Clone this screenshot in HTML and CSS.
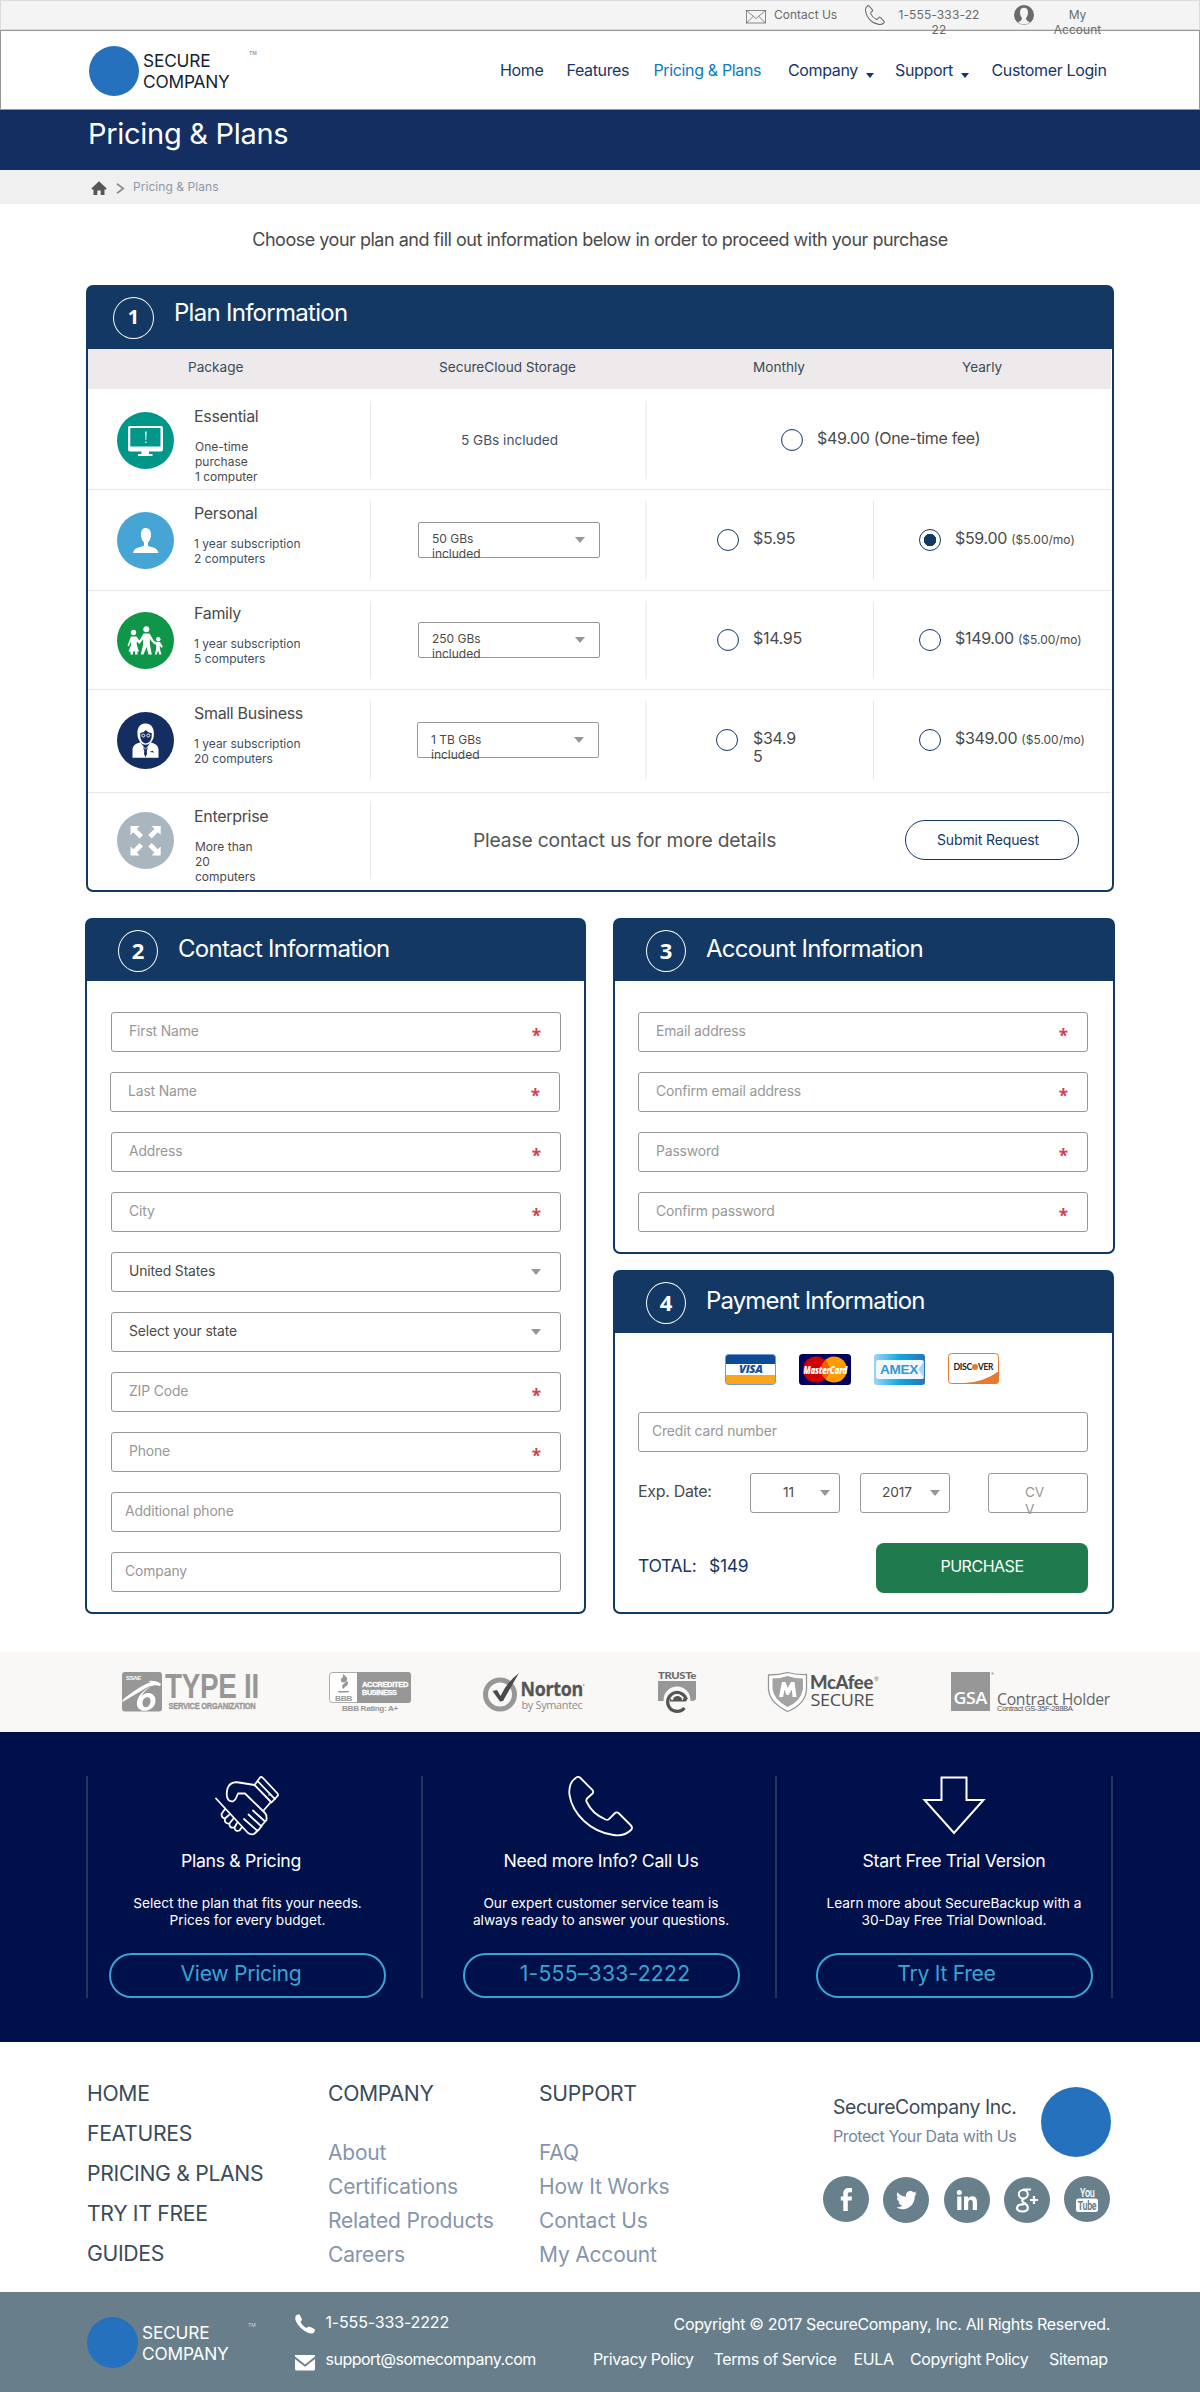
FILE: index.html
```html
<!DOCTYPE html>
<html lang="en">
<head>
<meta charset="utf-8">
<title>Pricing &amp; Plans - Secure Company</title>
<link rel="stylesheet" href="styles.css">
</head>
<body>
<div class="topbar">
  <svg class="tb-mail" width="20" height="14" viewBox="0 0 20 14" fill="none" stroke="#6d6d6d" stroke-width=".8"><rect x=".5" y=".5" width="19" height="12.5"/><path d="M.5 .5L10 8.5L19.5 .5M.5 13L7.3 6.3M19.5 13L12.7 6.3"/></svg>
  <a class="tb-contact">Contact Us</a>
  <svg class="tb-phone" width="20" height="20" viewBox="-1 -1 67 62" preserveAspectRatio="none" fill="none" stroke="#6d6d6d" stroke-width="3.500"><path d="M8.6 1C10 .5 11 1 12 2L24 14C25 15.500 25 16.500 24 17.500L19 22C17.500 23.500 17.500 25 18.500 26.500C22 34 29 40 37 43.500C39 44.300 40 44 41 42.500L46 37.500C47.500 36 49 36 50.500 37.500L62 49C64 51 64 52.500 62.500 54C58 58.500 52 60 45 59C22 56 4 38 1 19C0 11 2 5 8.600 1Z"/></svg>
  <a class="tb-number">1-555-333-22<br>22</a>
  <svg class="tb-user" width="20" height="20" viewBox="0 0 20 20"><circle cx="10" cy="10" r="10" fill="#6b6b6b"/><path d="M10 2.800C12.800 2.800 14 4.800 14 7.500C14 10 13 11.800 12.200 12.800C12 14.500 12.300 15.500 14.500 16.500L16 17.500Q13.500 19.500 10 19.500Q6.500 19.500 4 17.500L5.500 16.500C7.700 15.500 8 14.500 7.800 12.800C7 11.800 6 10 6 7.500C6 4.800 7.200 2.800 10 2.800Z" fill="#f4f4f4"/></svg>
  <a class="tb-account">My<br>Account</a>
</div>

<header class="header">
  <a class="logo"><i class="disc"></i><span class="logo-text">SECURE<br>COMPANY</span><sup class="tm">TM</sup></a>
  <nav class="nav">
    <a>Home</a><a>Features</a><a class="active">Pricing &amp; Plans</a><a>Company<i class="caret"></i></a><a>Support<i class="caret"></i></a><a>Customer Login</a>
  </nav>
</header>
<div class="title-band"><h1>Pricing &amp; Plans</h1></div>
<div class="crumbs">
  <svg width="16" height="15" viewBox="0 0 16 15"><path d="M8 .3L15.700 7.600L14.800 8.500H13.500V14H9.700V9.500H6.300V14H2.500V8.500H1.200L.3 7.600Z" fill="#565656"/></svg>
  <svg class="chev" width="9" height="11" viewBox="0 0 9 11"><path d="M1 .8L7.200 5.500L1 10.200" fill="none" stroke="#8b8b8b" stroke-width="1.700"/></svg>
  <span>Pricing &amp; Plans</span>
</div>
<p class="intro">Choose your plan and fill out information below in order to proceed with your purchase</p>

<section class="card plans">
  <div class="card-head"><b class="num">1</b><h2>Plan Information</h2></div>
  <div class="cols"><span>Package</span><span>SecureCloud Storage</span><span>Monthly</span><span>Yearly</span></div>

  <div class="row r1">
    <div class="cell pkg low">
      <svg class="badge" viewBox="0 0 57 57"><circle cx="28.500" cy="28.500" r="28.500" fill="#009688"/><path d="M12.500 14H44Q46 14 46 16V37.500Q46 39.500 44 39.500H32V42H35.500V44H21V42H24.500V39.500H13Q11 39.500 11 37.500V16Q11 14 12.500 14ZM13.300 16V34.500H43.500V16Z" fill="#fff" fill-rule="evenodd"/><path d="M28.200 19.500H29.600L29.300 28H28.500ZM28.300 29.500H29.500V31H28.300Z" fill="#fff"/></svg>
      <div><h3>Essential</h3><p class="grey">One-time<br>purchase<br>1 computer</p></div>
    </div>
    <div class="cell included">5 GBs included</div>
    <div class="cell wide"><i class="radio"></i><span>$49.00 (One-time fee)</span></div>
  </div>

  <div class="row r2">
    <div class="cell pkg">
      <svg class="badge" viewBox="0 0 57 57"><circle cx="28.500" cy="28.500" r="28.500" fill="#47a5d6"/><path d="M28.500 16C32 16 34 18.500 34 22.500C34 26.500 32.500 29 31 30.500V33.500C32 35.500 40.500 34.500 41.500 41H16C17 34.500 25.500 35.500 27 33.500V30.500C25.500 29 24 26.500 24 22.500C24 18.500 25.500 16 28.500 16Z" fill="#fff"/></svg>
      <div><h3>Personal</h3><p>1 year subscription<br>2 computers</p></div>
    </div>
    <div class="cell store"><div class="select">50 GBs<br>included<i class="tri"></i></div></div>
    <div class="cell month"><i class="radio"></i><span>$5.95</span></div>
    <div class="cell year"><i class="radio on"></i><span>$59.00 <small>($5.00/mo)</small></span></div>
  </div>

  <div class="row r3">
    <div class="cell pkg">
      <svg class="badge" viewBox="0 0 57 57"><circle cx="28.500" cy="28.500" r="28.500" fill="#0f9648"/><g fill="#fff"><circle cx="16.500" cy="20.500" r="2.700"/><circle cx="29.300" cy="17.300" r="3"/><circle cx="41.300" cy="27.200" r="2.200"/><path d="M14 24.500H19.500L22.500 28.500L26.500 21.500H32.500L37 29L39.500 30H43L45.800 34.500L44.800 36L42.800 34V36.500L44.500 42.500H42.300L41 38.500L39.800 42.500H37.800L39.200 36.500V33L36.500 31.500L32.800 27V32L34.800 42.500H31.500L29.500 35L26.500 42.500H23.800L26.200 32V27L22.500 32L19.800 29.500V33L22 39.500H20.500V42.500H18V39.500H16V42.500H13.500V39.500H11.500L14 33V29.500L11.800 34.500L10.500 33.500Z"/></g></svg>
      <div><h3>Family</h3><p>1 year subscription<br>5 computers</p></div>
    </div>
    <div class="cell store"><div class="select">250 GBs<br>included<i class="tri"></i></div></div>
    <div class="cell month"><i class="radio"></i><span>$14.95</span></div>
    <div class="cell year"><i class="radio"></i><span>$149.00 <small>($5.00/mo)</small></span></div>
  </div>

  <div class="row r4">
    <div class="cell pkg">
      <svg class="badge" viewBox="0 0 57 57"><circle cx="28.500" cy="28.500" r="28.500" fill="#142e62"/><path d="M15.500 45.800V38C15.500 33 20 31 23.500 30.500L28.500 37L33.500 30.500C37 31 41.500 33 41.500 38V45.800Z" fill="#fff"/><path d="M21 26C19 17 22 11.500 28.500 11.500C35 11.500 38 17 36.500 26L35 29C32 34 25 34 22.500 29Z" fill="#fff"/><path d="M23.300 21Q27 20.500 29 18Q31 21 34.700 21V25Q34 30.500 28.700 31.500Q24 30.500 23.300 25Z" fill="#142e62"/><g fill="none" stroke="#fff" stroke-width=".9"><circle cx="26.300" cy="23.500" r="1.500"/><circle cx="31.300" cy="23.500" r="1.500"/></g><path d="M26 35L28.500 37.500L31 35L29.800 39L30 42L28.500 45L27 42L27.300 39ZM32.500 40L35.500 38.800L37.500 40.500Z" fill="#142e62"/></svg>
      <div><h3>Small Business</h3><p>1 year subscription<br>20 computers</p></div>
    </div>
    <div class="cell store"><div class="select">1 TB GBs<br>included<i class="tri"></i></div></div>
    <div class="cell month"><i class="radio"></i><span>$34.9<br>5</span></div>
    <div class="cell year"><i class="radio"></i><span>$349.00 <small>($5.00/mo)</small></span></div>
  </div>

  <div class="row r5">
    <div class="cell pkg low">
      <svg class="badge" viewBox="0 0 57 57"><circle cx="28.500" cy="28.500" r="28.500" fill="#a9b6c0"/><g fill="#fff"><path d="M13.500 14H22.500L19.800 17L26 23L22.500 26.500L16.300 20.300L13.500 23Z"/><path d="M43.700 14H34.700L37.400 17L31.200 23L34.700 26.500L40.900 20.300L43.700 23Z"/><path d="M13.500 43.500H22.500L19.800 40.500L26 34.500L22.500 31L16.300 37.200L13.500 34.500Z"/><path d="M43.700 43.500H34.700L37.400 40.500L31.200 34.500L34.700 31L40.900 37.200L43.700 34.500Z"/></g></svg>
      <div><h3>Enterprise</h3><p class="grey">More than<br>20<br>computers</p></div>
    </div>
    <div class="cell enterprise"><span>Please contact us for more details</span><a class="submit">Submit Request</a></div>
  </div>
</section>

<div class="forms">
  <section class="card contact">
    <div class="card-head"><b class="num">2</b><h2>Contact Information</h2></div>
    <div class="fields">
      <div class="field">First Name<b>*</b></div>
      <div class="field nudge">Last Name<b>*</b></div>
      <div class="field">Address<b>*</b></div>
      <div class="field">City<b>*</b></div>
      <div class="field dark">United States<i class="tri"></i></div>
      <div class="field dark">Select your state<i class="tri"></i></div>
      <div class="field">ZIP Code<b>*</b></div>
      <div class="field">Phone<b>*</b></div>
      <div class="field plain">Additional phone</div>
      <div class="field plain">Company</div>
    </div>
  </section>
  <div class="right">
    <section class="card account">
      <div class="card-head"><b class="num">3</b><h2>Account Information</h2></div>
      <div class="fields">
        <div class="field">Email address<b>*</b></div>
        <div class="field">Confirm email address<b>*</b></div>
        <div class="field">Password<b>*</b></div>
        <div class="field">Confirm password<b>*</b></div>
      </div>
    </section>
    <section class="card payment">
      <div class="card-head"><b class="num">4</b><h2>Payment Information</h2></div>
      <div class="brands">
        <svg width="51" height="31" viewBox="0 0 51 31"><defs><clipPath id="vc"><rect x=".5" y=".5" width="50" height="30" rx="3"/></clipPath></defs><g clip-path="url(#vc)"><rect width="51" height="31" fill="#fff"/><rect width="51" height="10" fill="#0f4a94"/><rect y="21" width="51" height="10" fill="#f9a61c"/></g><rect x=".5" y=".5" width="50" height="30" rx="3" fill="none" stroke="#6f9bd0"/><text x="14" y="19" textLength="23.500" lengthAdjust="spacingAndGlyphs" font-family="Open Sans" font-weight="800" font-style="italic" font-size="10" fill="#0f4f96">VISA</text></svg>
        <svg width="52" height="31" viewBox="0 0 52 31"><rect width="52" height="31" rx="3.500" fill="#00005f"/><circle cx="35" cy="15.500" r="13" fill="#ff9a00"/><circle cx="17" cy="15.500" r="13" fill="#d00000"/><path d="M26 6.200A13 13 0 0 1 26 24.800A13 13 0 0 1 26 6.200Z" fill="#f06000"/><text x="4.500" y="20" textLength="43.500" lengthAdjust="spacingAndGlyphs" font-family="Open Sans" font-weight="800" font-style="italic" font-size="10" fill="#fff">MasterCard</text></svg>
        <svg width="51" height="31" viewBox="0 0 51 31"><defs><linearGradient id="ag"><stop offset="0" stop-color="#9ed4f6"/><stop offset=".5" stop-color="#10a8e0"/><stop offset="1" stop-color="#2a74b8"/></linearGradient></defs><rect width="51" height="31" rx="3" fill="url(#ag)"/><rect x="2" y="6" width="48" height="19" rx="2.500" fill="#f3f8fc"/><path d="M50 7L44.500 15.500L50 24" fill="#a9d3f0"/><text x="6" y="19.800" textLength="38" lengthAdjust="spacingAndGlyphs" font-family="Liberation Sans" font-weight="700" font-size="12.500" fill="#3597d4">AMEX</text></svg>
        <svg class="up" width="51" height="31" viewBox="0 0 51 31"><rect x=".5" y=".5" width="50" height="30" rx="3" fill="#fff" stroke="#e87830"/><path d="M17 30Q36 29 51 18V27Q51 31 47 31H17Z" fill="#e87830"/><text x="5.500" y="17" textLength="18.500" lengthAdjust="spacingAndGlyphs" font-family="Lato" font-weight="700" font-size="8.500" fill="#222">DISC</text><circle cx="27" cy="14" r="3" fill="#e87830"/><text x="30" y="17" textLength="15" lengthAdjust="spacingAndGlyphs" font-family="Lato" font-weight="700" font-size="8.500" fill="#222">VER</text></svg>
      </div>
      <div class="field cc">Credit card number</div>
      <div class="exp"><label>Exp. Date:</label><div class="mini m1">11<i class="tri"></i></div><div class="mini m2">2017<i class="tri"></i></div><div class="mini cvv">CV<br>V</div></div>
      <div class="pay"><span class="tot">TOTAL:</span><span class="sum">$149</span><a class="purchase">PURCHASE</a></div>
    </section>
  </div>
</div>

<div class="trust">
  <svg width="1200" height="80" viewBox="0 1652 1200 80">
    <g fill="#979797" font-family="Liberation Sans" font-weight="700">
      <rect x="122" y="1672" width="40" height="39.500" rx="3"/>
      <path d="M122.500 1700C132 1692 142 1685 151 1682L148 1681Q156 1680 161 1684L160 1686Q152 1684 146 1688Q136 1694 122.500 1702Z" fill="#fff"/>
      <path d="M154 1685C142 1690 136 1698 137 1705C138 1712 149 1713 154 1706C158 1699 154 1692 147 1693C143 1694 141 1697 141 1697Q145 1689 154 1685ZM142.500 1703C142.500 1696 151.500 1695 150.500 1701.500C149.500 1709 142.500 1709 142.500 1703Z" fill="#fff" fill-rule="evenodd"/>
      <text x="126" y="1679.500" font-size="6" textLength="15" lengthAdjust="spacingAndGlyphs" fill="#fff">SSAE</text>
      <text x="165" y="1697.500" font-size="35.500" textLength="94" lengthAdjust="spacingAndGlyphs">TYPE II</text>
      <text x="168.500" y="1709" font-size="9.500" textLength="87" lengthAdjust="spacingAndGlyphs" stroke="#979797" stroke-width=".3">SERVICE ORGANIZATION</text>
      <rect x="329.500" y="1672.500" width="81" height="30" rx="3" fill="#fff" stroke="#979797" stroke-width=".8"/>
      <path d="M357 1672H408Q411 1672 411 1675V1700Q411 1703 408 1703H357Z"/>
      <path d="M343 1674Q349 1678 346.500 1681Q343 1684 341 1681Q340 1679 343 1677ZM347 1681Q350 1684 345 1687L343 1689Q341 1686 343.500 1684ZM337.500 1691H349.500L348 1692.500H339Z"/>
      <text x="335" y="1700.500" font-size="8" textLength="17" lengthAdjust="spacingAndGlyphs">BBB</text>
      <text x="362" y="1686.500" font-size="7" textLength="46" lengthAdjust="spacingAndGlyphs" fill="#fff" stroke="#fff" stroke-width=".3">ACCREDITED</text>
      <text x="362" y="1695" font-size="7" textLength="34.500" lengthAdjust="spacingAndGlyphs" fill="#fff" stroke="#fff" stroke-width=".3">BUSINESS</text>
      <text x="342" y="1711" font-size="7.500" textLength="56" lengthAdjust="spacingAndGlyphs">BBB Rating: A+</text>
    </g>
    <circle cx="500" cy="1694.500" r="14.500" fill="none" stroke="#979797" stroke-width="5"/>
    <path d="M492.500 1691L497 1690L500.500 1696Q507 1682 519 1673Q512 1685 503 1701L500 1701.500Z" fill="#4a4a4a"/>
    <text x="520.500" y="1696.300" font-family="Open Sans" font-weight="700" font-size="19.500" textLength="62.500" lengthAdjust="spacingAndGlyphs" fill="#555" stroke="#555" stroke-width=".3">Norton</text><rect x="583" y="1684.500" width="1.500" height="1" fill="#777"/>
    <text x="521.500" y="1708.500" font-family="Open Sans" font-size="11" textLength="61" lengthAdjust="spacingAndGlyphs" fill="#8c8c8c">by Symantec</text>
    <text x="658" y="1679.300" font-family="Lato" font-weight="900" font-size="10" textLength="38" lengthAdjust="spacingAndGlyphs" fill="#6b6b6b">TRUSTe</text>
    <path d="M658 1681H696V1698Q696 1701 692 1701H658V1698Z" fill="#979797"/><circle cx="677" cy="1700" r="13.500" fill="#f9f8f6"/>
    <path d="M684.500 1708A9.500 9.500 0 1 1 686 1698.500L685 1700H670" fill="none" stroke="#555" stroke-width="3.200"/><path d="M671 1700A6 6 0 0 1 683 1700Z" fill="#f9f8f6"/><path d="M673 1700A4.500 4 0 0 1 682 1700Z" fill="#555"/>
    <path d="M768.500 1675Q779 1675 787.500 1672.500Q796 1675 806.500 1674.500V1689Q806 1704 787.500 1711.500Q769 1702 768.500 1689Z" fill="#fff" stroke="#979797" stroke-width="1.300"/>
    <path d="M772.500 1678.500Q780 1678.500 787.500 1676Q795 1678.500 803 1678.500V1689Q801 1701 787.500 1707Q774 1700 772.500 1689Z" fill="#a3a3a3"/>
    <path d="M779 1697L782 1682H785.500L787.700 1688L791 1682H794.500L796.500 1697H792.500L791.800 1689.500L788.500 1695H786.500L784.500 1689.500L783 1697Z" fill="#fff"/>
    <text x="810" y="1688.700" font-family="Lato" font-weight="900" font-size="18.500" textLength="63" lengthAdjust="spacingAndGlyphs" fill="#555">McAfee</text><text x="874" y="1680.500" font-family="Lato" font-size="6" fill="#777">®</text>
    <text x="810.500" y="1706" font-family="Open Sans" font-size="17" textLength="63.500" lengthAdjust="spacingAndGlyphs" fill="#4f4f4f">SECURE</text>
    <rect x="951" y="1672" width="39" height="39" fill="#979797"/><rect x="991.500" y="1672.500" width="2" height="2" fill="#8fa9c9"/>
    <text x="953.500" y="1704" font-family="Open Sans" font-weight="600" font-size="17" textLength="33.500" lengthAdjust="spacingAndGlyphs" fill="#fff">GSA</text>
    <text x="997" y="1704.500" font-family="Open Sans" font-weight="400" font-size="17" textLength="113" lengthAdjust="spacingAndGlyphs" fill="#666">Contract Holder</text>
    <text x="997" y="1711" font-family="Liberation Sans" font-size="6.500" textLength="75.500" lengthAdjust="spacingAndGlyphs" fill="#555">Contract GS-35F-288BA</text>
  </svg>
</div>

<section class="cta">
  <div class="cta-col">
    <svg width="66" height="60" viewBox="0 0 66 60" fill="none" stroke="#fff" stroke-width="1.800" stroke-linejoin="round" stroke-linecap="round"><path d="M39.500 9L45 1.500Q46 .5 47.500 1.500L62.500 17.500Q63.500 19 62.500 20L56.500 26.500L39.500 9ZM43 5.500L60 23.200M39.500 9L24 6.500Q15 5 12.500 12.500Q10.500 20 13.500 24Q19 28 21.500 21L23 17.500H30L50 37Q52 39 51.500 44L47.500 48.500L44 53.500L39 58Q36 59 33 57L1 22.500M55.500 26.500L49 34M38 34.500L49.500 45M33.500 38.500L46.500 50.500M29 43L42.500 55M10 33L6.500 38Q6.500 42 10 42.500L14 39M10 42.500Q9 48 14.500 47.500L18 43M14.500 47.500Q14 52.500 19.500 51.500L22 47M19.500 51.500Q20 56 24.500 54.500L27 51"/><circle cx="54" cy="19" r=".8" fill="#fff" stroke="none"/></svg>
    <h2>Plans &amp; Pricing</h2>
    <p>Select the plan that fits your needs.<br>Prices for every budget.</p>
    <a class="pill">View Pricing</a>
  </div>
  <div class="cta-col">
    <svg width="66" height="60" viewBox="-.5 0 66 60" fill="none" stroke="#fff" stroke-width="1.800"><path d="M8.600 1C10 .5 11 1 12 2L24 14C25 15.500 25 16.500 24 17.500L19 22C17.500 23.500 17.500 25 18.500 26.500C22 34 29 40 37 43.500C39 44.300 40 44 41 42.500L46 37.500C47.500 36 49 36 50.500 37.500L62 49C64 51 64 52.500 62.500 54C58 58.500 52 60 45 59C22 56 4 38 1 19C0 11 2 5 8.600 1Z"/></svg>
    <h2>Need more Info? Call Us</h2>
    <p>Our expert customer service team is<br>always ready to answer your questions.</p>
    <a class="pill">1-555–333-2222</a>
  </div>
  <div class="cta-col">
    <svg width="66" height="60" viewBox="0 0 66 60" fill="none" stroke="#fff" stroke-width="2"><path d="M20.500 1.500H45.500V24H62.500L33 57L3.500 24H20.500Z"/></svg>
    <h2>Start Free Trial Version</h2>
    <p>Learn more about SecureBackup with a<br>30-Day Free Trial Download.</p>
    <a class="pill">Try It Free</a>
  </div>
</section>

<div class="links">
  <ul class="main"><li>HOME</li><li>FEATURES</li><li>PRICING &amp; PLANS</li><li>TRY IT FREE</li><li>GUIDES</li></ul>
  <div class="sub"><h4>COMPANY</h4><ul><li>About</li><li>Certifications</li><li>Related Products</li><li>Careers</li></ul></div>
  <div class="sub"><h4>SUPPORT</h4><ul><li>FAQ</li><li>How It Works</li><li>Contact Us</li><li>My Account</li></ul></div>
  <div class="brand">
    <div class="brand-top"><div><strong>SecureCompany Inc.</strong><em>Protect Your Data with Us</em></div><i class="disc"></i></div>
    <div class="social">
      <svg viewBox="0 0 46 46"><circle cx="23" cy="23" r="23" fill="#68808c"/><path d="M29 12V16.200H26.800C25 16.200 24.800 17 24.800 18.200V20.500H29L28.500 24.500H24.800V35H20.300V24.500H17.800V20.500H20.300V17.500C20.300 14 22.300 12 25.800 12Z" fill="#fff"/></svg>
      <svg class="dn" viewBox="0 0 46 46"><circle cx="23" cy="23" r="23" fill="#68808c"/><path d="M33.800 16.500L31.800 19C32 26 27 32.200 20 32.200C17.500 32.200 15.300 31.500 13.300 30.300C15.800 30.500 17.800 29.800 19.500 28.500C17.500 28.300 16 27 15.500 25.200H17.300C15.200 24.500 13.800 22.800 13.800 20.600L15.700 21.200C13.800 19.700 13.300 17.300 14.400 15.300C16.600 18 19.500 19.500 23 19.700C22.300 16.500 24.500 14 27.300 14C28.700 14 29.800 14.500 30.600 15.500L33.300 14.500L31.800 16.900Z" fill="#fff"/></svg>
      <svg class="dn" viewBox="0 0 46 46"><circle cx="23" cy="23" r="23" fill="#68808c"/><g fill="#fff"><circle cx="15.300" cy="15.500" r="2.500"/><path d="M13.200 19.500H17.400V33H13.200ZM20 19.500H24V21.500C25 20 26.500 19.200 28.300 19.200C32 19.200 33 21.700 33 25.500V33H28.800V26C28.800 24 28.300 22.700 26.600 22.700C24.800 22.700 24.200 24 24.200 26V33H20Z"/></g></svg>
      <svg class="dn" viewBox="0 0 46 46"><circle cx="23" cy="23" r="23" fill="#68808c"/><g fill="none" stroke="#fff" stroke-width="2"><ellipse cx="19.300" cy="17.200" rx="4.500" ry="4.300"/><path d="M27 12.500H19M20 21.500C17 23.500 18 24.500 21 26.500C25.500 29.500 24.500 34.500 19 34.500C14 34.500 12 32 13.500 29.500C14.500 27.800 17 27.200 20.500 27.200M30 19V27M26 23H34" stroke-width="2.200"/></g></svg>
      <svg viewBox="0 0 46 46"><circle cx="23" cy="23" r="23" fill="#68808c"/><rect x="12" y="22.500" width="22" height="13.500" rx="2.500" fill="#fff"/><text x="16" y="20.800" font-family="Roboto" font-weight="500" font-size="13" textLength="14.500" lengthAdjust="spacingAndGlyphs" fill="#fff">You</text><text x="13.800" y="33.500" font-family="Roboto" font-weight="700" font-size="12" textLength="18.500" lengthAdjust="spacingAndGlyphs" fill="#68808c">Tube</text></svg>
    </div>
  </div>
</div>

<footer class="bottom">
  <a class="logo"><i class="disc"></i><span class="logo-text">SECURE<br>COMPANY</span><sup class="tm">TM</sup></a>
  <div class="reach">
    <svg class="ph" width="20" height="20" viewBox="0 0 20 20"><path d="M1 1.500Q2.500 0 4.500 .5Q6 3 7 5.500Q7 6.500 5.500 7.500Q7 11.500 11.500 14Q13 12.500 14 12.500Q17.500 13.500 20 15.500Q20 18 18 19.300Q14.500 20.500 9 16.500Q2 11.500 .3 5.500Q0 3 1 1.500Z" fill="#fff"/></svg><span>1-555-333-2222</span>
    <svg class="ml" width="20" height="16" viewBox="0 0 20 16"><path d="M0 0H20V1.500L10 9.500L0 1.500ZM0 4L10 11.700L20 4V14Q20 15.500 18.500 15.500H1.500Q0 15.500 0 14Z" fill="#fff"/></svg><span class="email">support@somecompany.com</span>
  </div>
  <div class="legal">
    <p>Copyright © 2017 SecureCompany, Inc. All Rights Reserved.</p>
    <nav><a>Privacy Policy</a><a>Terms of Service</a><a>EULA</a><a>Copyright Policy</a><a>Sitemap</a></nav>
  </div>
</footer>
</body>
</html>
```
FILE: styles.css
```css
* { box-sizing: border-box; }
body { margin: 0; width: 1200px; background: #fff; color: #4a4a4a; font: 400 16px/20px Inter, "Liberation Sans", sans-serif; letter-spacing: -0.02em; }
h1, h2, h3, h4, p, ul, strong, em { margin: 0; padding: 0; font-weight: 400; font-style: normal; list-style: none; }
svg { display: block; flex: none; overflow: visible; }
i { font-style: normal; flex: none; }
a, span, label { white-space: nowrap; }
.disc { border-radius: 50%; background: #2571bd; }

.topbar { position: relative; z-index: 1; display: flex; align-items: flex-start; height: 30px; padding-left: 745px; background: #f4f4f4; border: 1px solid #dcdcdc; font-size: 12px; line-height: 15px; letter-spacing: 0; color: #6b6b6b; }
.topbar a { margin-top: 6px; flex: none; }
.tb-mail { margin-top: 9px; }
.tb-contact { width: 99px; padding-left: 8px; }
.tb-phone { margin-top: 4px; }
.tb-number { width: 129px; padding-right: 21px; text-align: center; letter-spacing: 0.01em; }
.tb-user { margin-top: 4px; }
.tb-account { width: 87px; text-align: center; }

.logo { display: flex; align-items: flex-start; color: #12232f; }
.logo .disc { width: 50px; height: 50px; }
.logo-text { width: 106px; margin: 4px 0 0 4px; font-size: 17.300px; line-height: 21px; letter-spacing: -0.01em; }
.tm { font-size: 5px; line-height: 6px; letter-spacing: 0; margin-top: 4px; color: #777; }
.header { display: flex; height: 80px; border: 1px solid #979797; padding: 15px 0 0 88px; }
.nav { display: grid; grid-template-columns: 66.500px 87px 134.500px 107px 96.500px 115px; margin-left: 243px; padding-top: 14px; height: 34px; color: #17376a; letter-spacing: -0.022em; }
.nav .active { color: #0b7bc0; }
.header .logo { width: 168px; }
.caret { display: inline-block; margin-left: 8px; border: 4.500px solid transparent; border-top: 5px solid #17376a; border-bottom: 0; vertical-align: -2px; }

.title-band { height: 60px; background: #142e62; padding: 7px 0 0 88px; }
.title-band h1 { color: #fff; font-size: 29px; line-height: 34px; letter-spacing: -0.01em; }
.crumbs { display: flex; height: 34px; padding: 11px 0 0 91px; background: #f0f0f0; }
.crumbs .chev { margin: 2px 8px 0 9px; }
.crumbs span { font-size: 12px; line-height: 16px; letter-spacing: 0.005em; color: #8a9aa8; margin-top: -2px; }
.intro { padding-top: 24px; height: 81px; text-align: center; font-size: 18px; line-height: 24px; letter-spacing: -0.027em; }

.card { border: 2px solid #143864; border-radius: 7px; background: #fff; }
.card-head { display: flex; height: 62px; background: #143864; color: #fff; }
.card-head h2 { font-size: 24px; line-height: 28px; letter-spacing: -0.03em; }
.num { width: 41px; height: 42px; border: 1px solid #fff; border-radius: 50%; text-align: center; font: 700 20px/38px "Open Sans", sans-serif; letter-spacing: 0; }

.plans { width: 1028px; height: 607px; margin-left: 86px; }
.plans .card-head { padding: 10px 0 0 25px; }
.plans .card-head h2 { margin: 2px 0 0 20px; }
.cols { display: grid; grid-template-columns: 251px 314px 209px 1fr; height: 40px; margin-right: 1px; padding: 9px 0 0 100px; background: #eee9ea; color: #3b4a58; font-size: 13.600px; line-height: 18px; letter-spacing: 0; }
.row { display: grid; grid-template-columns: 283px 276px 227px 1fr; margin-right: 1px; border-bottom: 1px solid #e9e8e9; }
.r1 { height: 101px; padding-top: 12px; }
.r2 { height: 101px; padding-top: 11px; }
.r3 { height: 99px; padding-top: 10px; }
.r4 { height: 103px; padding-top: 11px; }
.r5 { height: 97px; padding-top: 8px; border: 0; }
.cell { display: flex; align-items: flex-start; height: 78px; }
.pkg { padding-left: 29px; border-right: 1px solid #e8e8ea; }
.badge { width: 57px; height: 57px; margin: 11px 20px 0 0; }
.pkg h3 { font-size: 16px; line-height: 20px; margin-top: 2px; }
.pkg p { font-size: 12px; line-height: 15px; letter-spacing: 0; margin-top: 13px; color: #3f5161; white-space: nowrap; }
.pkg p.grey { color: #4a4a4a; }
.low h3 { margin-top: 5px; }
.low p { padding-left: 1px; }
.included, .store { border-right: 2px solid #f3f3f4; }
.included { padding: 30px 0 0 90px; font-size: 13.600px; line-height: 18px; letter-spacing: 0; color: #3f5161; }
.wide { grid-column: 3 / 5; padding-left: 134px; }
.month { padding-left: 70px; border-right: 1px solid #e8e8ea; }
.year { padding-left: 45px; }
.radio { width: 22px; height: 22px; margin: 28px 14px 0 0; border: 1px solid #143864; border-radius: 50%; }
.radio.on { background: radial-gradient(circle, #143864 0 6px, transparent 6.500px); }
.radio + span { margin-top: 28px; line-height: 18px; }
.radio + span small { font-size: 12px; letter-spacing: 0; }
.r4 .month .radio { margin-left: -1px; margin-right: 15px; }
.store { padding: 21px 0 0 47px; }
.select { position: relative; width: 182px; height: 36px; padding: 8px 0 0 13px; border: 1px solid #979797; border-radius: 2px; font-size: 12px; line-height: 15px; letter-spacing: 0; }
.r4 .select { margin-left: -1px; padding-top: 9px; }
.tri { border: 5.500px solid transparent; border-top: 6.500px solid #979797; border-bottom: 0; margin-left: auto; }
.select .tri { position: absolute; right: 14px; top: 14px; }
.enterprise { grid-column: 2 / 5; padding: 19px 0 0 102px; }
.enterprise span { width: 432px; margin-top: 8px; font-size: 19.300px; line-height: 24px; letter-spacing: -0.01em; color: #555; }
.submit { width: 174px; height: 40px; border: 1px solid #143864; border-radius: 20px; padding-left: 31px; font-size: 14px; line-height: 38px; letter-spacing: -0.01em; color: #143864; }

.forms { display: flex; justify-content: space-between; width: 1030px; margin: 26px 0 0 85px; }
.contact { width: 501px; height: 696px; }
.contact .card-head, .right .card-head { padding: 10px 0 0 31px; height: 61px; }
.forms .num { width: 40px; font-size: 22px; }
.forms h2 { margin: 5px 0 0 20px; }
.payment h2 { letter-spacing: -0.036em; }
.fields { display: flex; flex-direction: column; gap: 20px; padding: 31px 0 0 24px; }
.field { display: flex; align-items: center; width: 450px; height: 40px; padding: 0 17px; border: 1px solid #979797; border-radius: 3px; font-size: 13.900px; line-height: 18px; letter-spacing: -0.01em; color: #979797; padding-bottom: 3px; }
.field.nudge { margin-left: -1px; }
.field.dark { color: #4a4a4a; }
.field.plain { padding-left: 13px; }
.field b { margin: 11px 2px 0 auto; font: 700 17px/20px "Open Sans", sans-serif; color: #cf4054; letter-spacing: 0; }
.field .tri { margin-right: 2px; margin-top: 2px; }
.right { width: 502px; }
.account { height: 336px; margin-bottom: 16px; }
.account .fields { padding-left: 23px; }
.payment { width: 501px; height: 344px; }
.brands { display: flex; gap: 23px; padding: 21px 0 0 110px; height: 79px; }
.brands .up { margin-top: -1px; }
.field.cc { margin-left: 23px; padding-left: 13px; }
.exp { display: flex; margin: 21px 0 0 23px; }
.exp label { width: 112px; padding-top: 8px; line-height: 20px; }
.mini { position: relative; width: 90px; height: 40px; border: 1px solid #979797; border-radius: 3px; padding: 10px 0 0 32px; font-size: 13.700px; line-height: 17px; letter-spacing: -0.01em; }
.mini .tri { position: absolute; right: 9px; top: 16px; }
.m2 { margin-left: 20px; padding-left: 21px; }
.mini.cvv { width: 100px; margin-left: 38px; padding-left: 36px; color: #979797; }
.pay { display: flex; margin: 30px 0 0 23px; color: #143864; font-size: 17.500px; line-height: 24px; }
.tot, .sum { width: 71px; margin-top: 11px; }
.sum { width: 167px; }
.purchase { width: 212px; height: 50px; border-radius: 8px; background: #1f7a4d; color: #fff; text-align: center; font-size: 16px; line-height: 46px; letter-spacing: -0.03em; }

.trust { height: 80px; margin-top: 38px; background: #f9f8f6; }
.cta { display: flex; height: 310px; padding: 44px 0 0 86px; background: #00104a; color: #fff; }
.cta-col { width: 335px; height: 222px; border-left: 2px solid #26355f; display: flex; flex-direction: column; align-items: center; text-align: center; }
.cta-col:nth-child(2) { width: 354px; padding-left: 4px; }
.cta-col:last-child { width: 338px; padding-left: 20px; border-right: 2px solid #26355f; }
.cta-col:first-child { padding-right: 14px; }
.cta h2 { font-size: 17.700px; line-height: 24px; margin-top: 13px; }
.cta p { font-size: 13.700px; line-height: 17px; letter-spacing: 0; margin-top: 22px; white-space: nowrap; }
.pill { width: 277px; height: 46px; margin-top: 24px; border: 2px solid #3ba3d2; border-radius: 23px; font-size: 21.200px; line-height: 36px; letter-spacing: -0.015em; color: #3ba3d2; }
.cta-col:first-child h2, .cta-col:first-child .pill { padding-right: 13px; }
.cta-col:nth-child(2) .pill { padding-left: 8px; letter-spacing: 0.01em; }
.cta-col:last-child .pill { padding-right: 15px; }

.links { display: flex; height: 250px; padding: 38px 0 0 87px; font-size: 21.200px; letter-spacing: -0.015em; color: #3a4b5a; }
.main { width: 241px; }
.main li { line-height: 40px; }
.main, .sub { margin-top: -7px; }
.sub { width: 211px; }
.sub h4 { line-height: 40px; margin-bottom: 23px; }
.sub li { font-size: 21px; line-height: 34px; color: #8595ab; letter-spacing: -0.009em; }
.sub + .sub { width: 284px; }
.brand { padding-top: 7px; letter-spacing: -0.02em; }
.brand-top { display: flex; padding-left: 10px; }
.brand-top div { width: 208px; padding-top: 7px; }
.brand strong { display: block; font-size: 19.400px; line-height: 26px; white-space: nowrap; }
.brand em { display: block; margin-top: 6px; font-size: 16px; line-height: 20px; color: #77859b; white-space: nowrap; }
.brand .disc { width: 70px; height: 70px; }
.social { display: flex; gap: 14.300px; margin-top: 19px; }
.social svg { width: 46px; height: 46px; }
.social .dn { margin-top: 1px; }

.bottom { display: flex; height: 100px; padding-left: 87px; background: #687f8b; color: #fff; letter-spacing: -0.02em; }
.bottom .logo { width: 208px; padding-top: 25px; color: #fff; }
.bottom .disc { width: 51px; height: 51px; }
.bottom .logo-text { margin-top: 5px; }
.bottom .tm { color: #d0d8dc; margin-top: 5px; }
.reach { display: grid; grid-template-columns: 30.500px 1fr; grid-template-rows: 37px 37px; width: 298px; padding-top: 20px; align-content: start; letter-spacing: -0.01em; }
.reach .email { letter-spacing: -0.032em; }
.reach .ph { margin-top: 2px; }
.reach .ml { margin-top: 6px; }
.legal p { width: 517px; text-align: right; padding-top: 22px; }
.legal nav { display: grid; grid-template-columns: 120.500px 140px 56.500px 139px 60px; margin-top: 15px; letter-spacing: -0.023em; }
```
